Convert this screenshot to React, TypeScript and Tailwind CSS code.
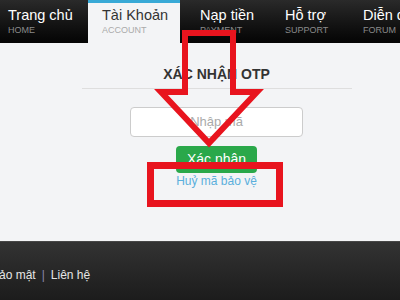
import React from "react";

const tabs = [
  { t: "Trang chủ", s: "HOME", w: "w-[88px]", pl: "pl-[8px]", active: false },
  { t: "Tài Khoản", s: "ACCOUNT", w: "w-[92px]", pl: "pl-[14px]", active: true },
  { t: "Nạp tiền", s: "PAYMENT", w: "w-[85px]", pl: "pl-[20px]", active: false },
  { t: "Hỗ trợ", s: "SUPPORT", w: "w-[78px]", pl: "pl-[20px]", active: false },
  { t: "Diễn đàn", s: "FORUM", w: "w-[90px]", pl: "pl-[20px]", active: false },
];

export default function App() {
  return (
    <div
      className="relative w-[400px] h-[300px] overflow-hidden bg-[#f3f4f6]"
      style={{ fontFamily: '"Liberation Sans", Arial, sans-serif' }}
    >
      {/* Nav */}
      <div className="flex h-[43px] bg-gradient-to-b from-[#2a2a2a] to-[#050505] overflow-hidden">
        {tabs.map((tab) => (
          <div
            key={tab.s}
            className={`${tab.w} ${tab.pl} shrink-0 flex flex-col ${
              tab.active
                ? "bg-[#f3f4f6] border-t-[3px] border-[#38a9d6] pt-[4px]"
                : "pt-[7px]"
            }`}
          >
            <div
              className={`text-[14.5px] leading-[16px] whitespace-nowrap ${
                tab.active ? "text-[#333]" : "text-white"
              }`}
            >
              {tab.t}
            </div>
            <div
              className={`text-[9px] leading-[12px] mt-[1px] whitespace-nowrap ${
                tab.active ? "text-[#aaa]" : "text-[#8a8a8a]"
              }`}
            >
              {tab.s}
            </div>
          </div>
        ))}
      </div>

      {/* Body */}
      <div className="h-[198px] flex flex-col items-center pt-[21px] pl-[33px]">
        <div className="text-[14px] leading-[20px] font-bold text-[#333]">
          XÁC NHẬN OTP
        </div>
        <div className="mt-[4px] w-[270px] h-px bg-[#dedede]" />
        <div className="mt-[18px] w-[173px] h-[30px] bg-white border border-[#ccc] rounded-[4px] flex items-center justify-center text-[13px] text-[#aaa]">
          Nhập mã
        </div>
        <div className="mt-[9px] w-[81px] h-[27px] bg-[#2aa84a] rounded-[4px] flex items-center justify-center text-[14px] text-white">
          Xác nhận
        </div>
        <div className="mt-0 text-[12px] leading-[16px] text-[#5aafdc]">
          Huỷ mã bảo vệ
        </div>
      </div>

      {/* Footer */}
      <div className="h-[59px] border-t border-[#474747] bg-gradient-to-b from-[#333] to-[#1c1c1c] pt-[25px]">
        <div className="ml-[-9px] flex items-center text-[12px] leading-[16px] text-[#e5e5e5] whitespace-nowrap">
          <span>Bảo mật</span>
          <span className="mx-[6px] text-[#8a84a8]">|</span>
          <span>Liên hệ</span>
        </div>
      </div>

      {/* Red annotations */}
      <svg
        className="absolute left-0 top-0 pointer-events-none"
        width="400"
        height="300"
        viewBox="0 0 400 300"
      >
        <path
          d="M185 33 L233 33 L233 92 L257 92 L209 143 L161 92 L185 92 Z"
          fill="none"
          stroke="#e8141e"
          strokeWidth="6"
          strokeLinejoin="miter"
        />
        <rect
          x="150.5"
          y="165.5"
          width="129"
          height="38"
          fill="none"
          stroke="#e8141e"
          strokeWidth="7"
        />
      </svg>
    </div>
  );
}
